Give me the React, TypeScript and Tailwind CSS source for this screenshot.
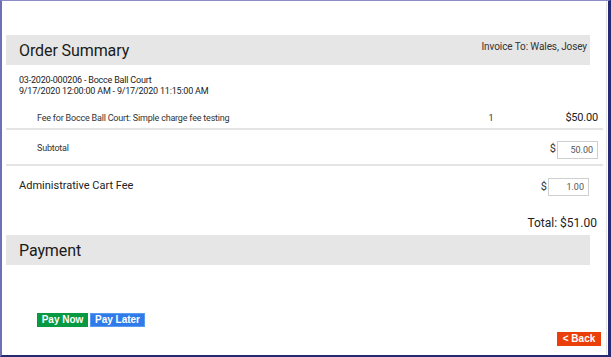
import React from 'react';

function MoneyBox({ value }: { value: string }) {
  return (
    <div className="flex items-center gap-[1px]">
      <span className="text-[11px] text-[#333]">$</span>
      <div className="w-[41px] h-[18px] border border-[#cfcfcf] bg-white text-right pr-[4px] text-[9px] leading-[16px] text-[#555]">
        {value}
      </div>
    </div>
  );
}

export default function App() {
  return (
    <div
      className="w-[611px] h-[357px] bg-white box-border border-l-2 border-l-[#6d70b4] border-t border-t-[#8b8ec6] border-r-[3px] border-r-[#262a72] border-b-2 border-b-[#262a72] overflow-hidden"
      style={{ fontFamily: 'Roboto, "Liberation Sans", sans-serif' }}
    >
      <div className="h-full border-r border-r-[#e2e2e2] mr-[1px] pl-[4px] pr-[3px] pt-[34px] flex flex-col text-[#222]">
        {/* Order Summary */}
        <div className="w-[584px] h-[30px] bg-[#e6e6e6] flex justify-between">
          <h2 className="pl-[13px] pt-[1px] text-[16px] tracking-[-0.1px] leading-[30px] text-[#1a1a1a]">Order Summary</h2>
          <span className="pr-[3px] pt-[5px] text-[10px] tracking-[-0.1px] leading-[13px] text-[#333]">Invoice To: Wales, Josey</span>
        </div>

        <div className="pl-[13px] pt-[10px] text-[9px] tracking-[-0.2px] leading-[11px] text-[#222]">
          <div>03-2020-000206 - Bocce Ball Court</div>
          <div>9/17/2020 12:00:00 AM - 9/17/2020 11:15:00 AM</div>
        </div>

        <div className="mt-[12px] h-[21px] flex items-center border-b-2 border-b-[#e4e4e4] pr-[5px]">
          <span className="pl-[31px] text-[9px] tracking-[-0.2px] text-[#333] flex-1">Fee for Bocce Ball Court: Simple charge fee testing</span>
          <span className="text-[9px] text-[#333] w-[77px]">1</span>
          <span className="text-[11px] tracking-[-0.2px] text-[#222]">$50.00</span>
        </div>

        <div className="h-[36px] flex items-center justify-between border-b-2 border-b-[#e4e4e4] pr-[5px]">
          <span className="pl-[31px] text-[9px] tracking-[-0.2px] text-[#333] mt-[4px]">Subtotal</span>
          <div className="mt-[5px]">
            <MoneyBox value="50.00" />
          </div>
        </div>

        <div className="h-[42px] flex items-center justify-between pr-[14px]">
          <span className="pl-[13px] text-[11px] text-[#222] -mt-[2px]">Administrative Cart Fee</span>
          <div className="mt-[0px]">
            <MoneyBox value="1.00" />
          </div>
        </div>

        <div className="h-[27px] pt-[6px] flex items-start justify-end pr-[6px]">
          <span className="text-[12px] text-[#222]">Total: $51.00</span>
        </div>

        {/* Payment */}
        <div className="w-[584px] h-[30px] bg-[#e6e6e6] flex items-center">
          <h2 className="pl-[13px] pt-[1px] text-[16px] tracking-[-0.1px] leading-[30px] text-[#1a1a1a]">Payment</h2>
        </div>

        <div className="mt-[48px] pl-[31px] flex gap-[2px]" style={{ fontFamily: '"Liberation Sans", Arial, sans-serif' }}>
          <button className="w-[51px] h-[14px] bg-[#079a42] text-white text-[10px] font-bold leading-[14px]">Pay Now</button>
          <button className="w-[55px] h-[14px] bg-[#2f7bea] border border-[#5a9af0] text-white text-[10px] font-bold leading-[12px]">Pay Later</button>
        </div>

        <div className="mt-[5px] flex justify-end pr-[2px]" style={{ fontFamily: '"Liberation Sans", Arial, sans-serif' }}>
          <button className="w-[44px] h-[14px] bg-[#ea3f0b] text-white text-[10px] font-bold leading-[14px]">&lt; Back</button>
        </div>
      </div>
    </div>
  );
}
